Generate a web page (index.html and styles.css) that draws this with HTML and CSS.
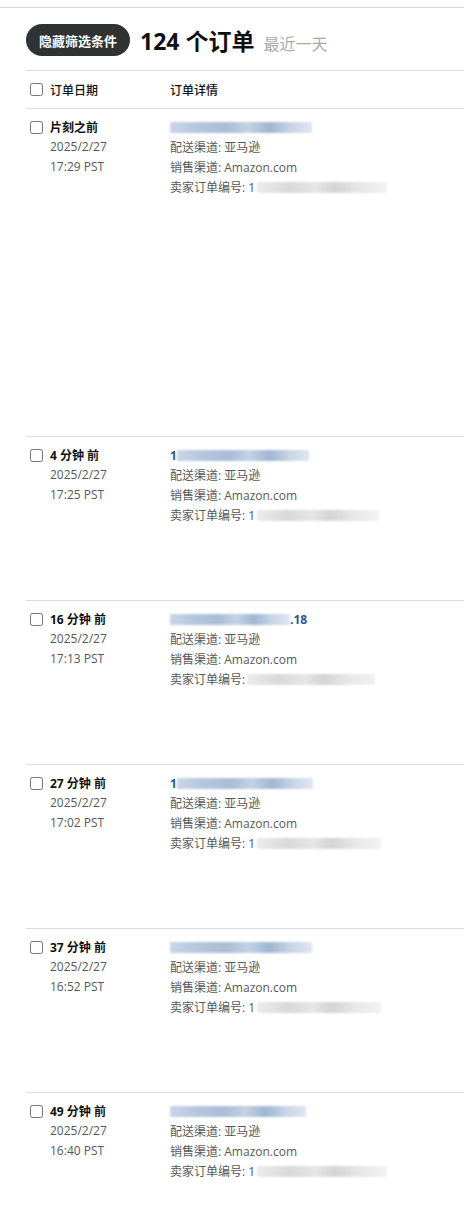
FILE: index.html
```html
<!DOCTYPE html>
<html lang="zh-CN">
<head>
    <meta charset="UTF-8">
    <meta name="viewport" content="width=device-width, initial-scale=1.0">
    <title>管理订单</title>
    <link rel="stylesheet" href="styles.css">
</head>
<body>
    <div class="topline"></div>

    <div class="page">
        <div class="summary">
            <button class="filter-btn">隐藏筛选条件</button>
            <span class="count">124 个订单</span>
            <span class="range">最近一天</span>
        </div>

        <div class="orders">
            <div class="row head">
                <div class="col-date"><input type="checkbox"><span>订单日期</span></div>
                <div class="col-detail">订单详情</div>
            </div>

            <div class="row order tall">
                <div class="col-date">
                    <div class="when"><input type="checkbox"><span>片刻之前</span></div>
                    <div class="sub">2025/2/27</div>
                    <div class="sub">17:29 PST</div>
                </div>
                <div class="col-detail">
                    <div class="line"><span class="blur-id" style="width: 142px"></span></div>
                    <div class="line">配送渠道: 亚马逊</div>
                    <div class="line">销售渠道: Amazon.com</div>
                    <div class="line">卖家订单编号: 1<span class="blur-seller" style="width: 130px"></span></div>
                </div>
            </div>

            <div class="row order">
                <div class="col-date">
                    <div class="when"><input type="checkbox"><span>4 分钟 前</span></div>
                    <div class="sub">2025/2/27</div>
                    <div class="sub">17:25 PST</div>
                </div>
                <div class="col-detail">
                    <div class="line"><span class="id-part">1</span><span class="blur-id" style="width: 132px"></span></div>
                    <div class="line">配送渠道: 亚马逊</div>
                    <div class="line">销售渠道: Amazon.com</div>
                    <div class="line">卖家订单编号: 1<span class="blur-seller" style="width: 122px"></span></div>
                </div>
            </div>

            <div class="row order">
                <div class="col-date">
                    <div class="when"><input type="checkbox"><span>16 分钟 前</span></div>
                    <div class="sub">2025/2/27</div>
                    <div class="sub">17:13 PST</div>
                </div>
                <div class="col-detail">
                    <div class="line"><span class="blur-id" style="width: 120px"></span><span class="id-part">.18</span></div>
                    <div class="line">配送渠道: 亚马逊</div>
                    <div class="line">销售渠道: Amazon.com</div>
                    <div class="line">卖家订单编号: <span class="blur-seller" style="width: 128px"></span></div>
                </div>
            </div>

            <div class="row order">
                <div class="col-date">
                    <div class="when"><input type="checkbox"><span>27 分钟 前</span></div>
                    <div class="sub">2025/2/27</div>
                    <div class="sub">17:02 PST</div>
                </div>
                <div class="col-detail">
                    <div class="line"><span class="id-part">1</span><span class="blur-id" style="width: 136px"></span></div>
                    <div class="line">配送渠道: 亚马逊</div>
                    <div class="line">销售渠道: Amazon.com</div>
                    <div class="line">卖家订单编号: 1<span class="blur-seller" style="width: 124px"></span></div>
                </div>
            </div>

            <div class="row order">
                <div class="col-date">
                    <div class="when"><input type="checkbox"><span>37 分钟 前</span></div>
                    <div class="sub">2025/2/27</div>
                    <div class="sub">16:52 PST</div>
                </div>
                <div class="col-detail">
                    <div class="line"><span class="blur-id" style="width: 142px"></span></div>
                    <div class="line">配送渠道: 亚马逊</div>
                    <div class="line">销售渠道: Amazon.com</div>
                    <div class="line">卖家订单编号: 1<span class="blur-seller" style="width: 124px"></span></div>
                </div>
            </div>

            <div class="row order">
                <div class="col-date">
                    <div class="when"><input type="checkbox"><span>49 分钟 前</span></div>
                    <div class="sub">2025/2/27</div>
                    <div class="sub">16:40 PST</div>
                </div>
                <div class="col-detail">
                    <div class="line"><span class="blur-id" style="width: 136px"></span></div>
                    <div class="line">配送渠道: 亚马逊</div>
                    <div class="line">销售渠道: Amazon.com</div>
                    <div class="line">卖家订单编号: 1<span class="blur-seller" style="width: 130px"></span></div>
                </div>
            </div>
        </div>
    </div>
</body>
</html>
```

FILE: styles.css
```css
body {
    margin: 0;
    font-family: "Open Sans", "Noto Sans CJK SC", sans-serif;
    font-size: 12px;
    color: #111;
    background-color: #fff;
}
.topline {
    height: 7px;
    border-bottom: 1px solid #d5d5d5;
}
.page {
    padding-left: 26px;
}
.summary {
    display: flex;
    align-items: center;
    height: 32px;
    margin-top: 16px;
    margin-bottom: 14px;
}
.filter-btn {
    height: 32px;
    padding: 0 13px;
    border: none;
    border-radius: 9999px;
    background-color: #2f3333;
    color: #fff;
    font-family: "Noto Sans CJK SC", sans-serif;
    font-size: 13px;
    font-weight: bold;
    cursor: pointer;
}
.count {
    margin-left: 10px;
    font-size: 23px;
    font-weight: bold;
    color: #0f1111;
}
.range {
    margin-left: 9px;
    margin-top: 5px;
    font-size: 16px;
    color: #aaa;
}
.orders {
    border-top: 1px solid #ddd;
}
.row {
    display: flex;
    border-bottom: 1px solid #ddd;
}
.head {
    height: 37px;
    align-items: center;
    font-weight: 500;
}
.col-date {
    width: 144px;
    flex-shrink: 0;
    padding-left: 4px;
    box-sizing: border-box;
}
.head .col-date {
    display: flex;
    align-items: center;
}
input[type="checkbox"] {
    width: 13px;
    height: 13px;
    margin: 0 7px 0 0;
}
.order {
    padding-top: 8px;
    height: 155px;
}
.order.tall {
    height: 319px;
}
.when {
    display: flex;
    align-items: center;
    height: 20px;
    font-weight: bold;
}
.sub {
    padding-left: 20px;
    line-height: 20px;
    color: #565959;
}
.line {
    display: flex;
    align-items: center;
    height: 20px;
    color: #565959;
}
.id-part {
    color: #2b5a8c;
    font-weight: bold;
}
.blur-id {
    display: inline-block;
    height: 11px;
    background: linear-gradient(90deg, #c9d6e6 0%, #b4c6dc 20%, #a9bdd6 40%, #c4d2e3 55%, #9fb6d2 70%, #c8d5e5 85%, #dfe6ef 100%);
    filter: blur(1px);
}
.blur-seller {
    display: inline-block;
    height: 11px;
    margin-left: 2px;
    background: linear-gradient(90deg, #ececec 0%, #d9d9d9 25%, #e6e6e6 45%, #d4d4d4 60%, #e8e8e8 80%, #f2f2f2 100%);
    filter: blur(1px);
}
```
